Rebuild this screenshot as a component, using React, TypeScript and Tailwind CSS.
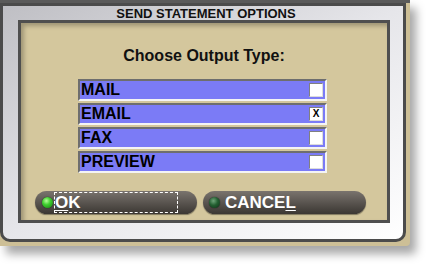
import React from 'react';

const options = [
  { label: 'MAIL', checked: false },
  { label: 'EMAIL', checked: true },
  { label: 'FAX', checked: false },
  { label: 'PREVIEW', checked: false },
];

const Led = ({ on }: { on: boolean }) => (
  <span
    className={
      on
        ? 'w-[11px] h-[11px] rounded-full shrink-0 bg-[radial-gradient(circle_at_40%_35%,#b6ff9a_0%,#3fcf2f_40%,#137a12_100%)] shadow-[0_0_1px_#000]'
        : 'w-[11px] h-[11px] rounded-full shrink-0 bg-[radial-gradient(circle_at_40%_35%,#6fa57a_0%,#235f31_45%,#0d2f16_100%)] shadow-[0_0_1px_#000]'
    }
  />
);

export default function App() {
  return (
    <div className="w-[426px] h-[265px] bg-white overflow-hidden font-['Liberation_Sans',Arial,sans-serif]">
      <div className="w-[410px] h-[246px] bg-[#cdbf96] shadow-[6px_8px_10px_rgba(0,0,0,0.35)] rounded-br-[4px]">
        <div className="h-[3px] bg-[#5a5a5a]" />
        <div className="w-[406px] h-[239px] border-[3px] border-[#4b4b4b] rounded-b-[10px] bg-gradient-to-br from-[#bfbfc4] via-[#e6e6ea] to-[#ffffff] flex flex-col">
          <div className="h-[14px] flex items-center justify-center text-[13px] font-bold text-[#111] leading-none pt-[1px] pl-[6px]">
            SEND STATEMENT OPTIONS
          </div>
          <div className="ml-[15px] w-[372px] h-[203px] border-[3px] border-[#4f4f4f] bg-[#d4c79d] shadow-[inset_3px_3px_4px_rgba(0,0,0,0.25)] flex flex-col">
            <div className="pt-[23px] h-[43px] text-center text-[16px] font-bold text-[#111] leading-[20px]">
              Choose Output Type:
            </div>
            <div className="mt-[13px] ml-[57px] w-[249px] flex flex-col gap-[2px]">
              {options.map((o) => (
                <div
                  key={o.label}
                  className="h-[22px] bg-[#7b7bf6] border-2 border-t-[#6e6e6e] border-l-[#6e6e6e] border-b-[#f4f4f4] border-r-[#f4f4f4] flex items-center justify-between pl-[1px] pr-[2px]"
                >
                  <span className="text-[16px] font-bold text-black leading-none">{o.label}</span>
                  <span className="w-[14px] h-[14px] bg-white border border-t-[#808080] border-l-[#808080] border-b-[#dcdcdc] border-r-[#dcdcdc] flex items-center justify-center text-[10px] font-bold text-black leading-none">
                    {o.checked ? 'X' : ''}
                  </span>
                </div>
              ))}
            </div>
            <div className="mt-[18px] ml-[14px] flex gap-[6px]">
              <button className="w-[162px] h-[23px] rounded-full bg-gradient-to-b from-[#7a746e] via-[#5a5550] to-[#3b3733] shadow-[0_1px_1px_rgba(0,0,0,0.4)] flex items-center pl-[7px]">
                <Led on />
                <span className="ml-[1px] h-[21px] w-[124px] border border-dashed border-white flex items-center pl-[0px]">
                  <span className="text-[17px] font-bold text-white leading-none">
                    <span className="underline underline-offset-2">O</span>K
                  </span>
                </span>
              </button>
              <button className="w-[163px] h-[23px] rounded-full bg-gradient-to-b from-[#7a746e] via-[#5a5550] to-[#3b3733] shadow-[0_1px_1px_rgba(0,0,0,0.4)] flex items-center pl-[6px]">
                <Led on={false} />
                <span className="ml-[5px] text-[17px] font-bold text-white leading-none">
                  CANCE<span className="underline underline-offset-2">L</span>
                </span>
              </button>
            </div>
          </div>
        </div>
      </div>
    </div>
  );
}
